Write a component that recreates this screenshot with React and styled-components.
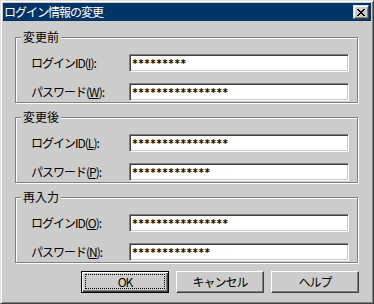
import React from 'react';
import styled, { createGlobalStyle } from 'styled-components';

const GlobalStyle = createGlobalStyle`
  html, body {
    margin: 0;
    padding: 0;
    background: #cccccc;
  }
  body {
    font-family: "Noto Sans CJK JP", "Liberation Sans", sans-serif;
    font-size: 12px;
    color: #000;
  }
`;

const Window = styled.div`
  box-sizing: border-box;
  width: 374px;
  height: 304px;
  display: flex;
  flex-direction: column;
  background: #cccccc;
  border: 1px solid;
  border-color: #dfdfdf #404040 #404040 #dfdfdf;
  box-shadow: inset 1px 1px #fff, inset -1px -1px #808080;
  padding: 2px;
`;

const TitleBar = styled.div`
  height: 18px;
  display: flex;
  align-items: center;
  justify-content: space-between;
  padding: 0 2px 0 1px;
  background: #003366;
`;

const TitleText = styled.span`
  color: #fff;
  font-size: 12px;
  line-height: 18px;
  letter-spacing: -1px;
`;

const CloseButton = styled.div`
  box-sizing: border-box;
  width: 16px;
  height: 14px;
  display: flex;
  align-items: center;
  justify-content: center;
  padding-right: 1px;
  background: #cccccc;
  border: 1px solid;
  border-color: #dfdfdf #404040 #404040 #dfdfdf;
  box-shadow: inset 1px 1px #fff, inset -1px -1px #808080;
`;

const Content = styled.div`
  flex: 1;
  display: flex;
  flex-direction: column;
  padding: 16px 13px 0 12px;
`;

const Groups = styled.div`
  display: flex;
  flex-direction: column;
  gap: 14px;
`;

const Group = styled.div`
  position: relative;
  box-sizing: border-box;
  height: 66px;
  border: 1px solid #808080;
  box-shadow: inset 1px 1px #fff, 1px 1px #fff;
  padding: 14px 8px 0 15px;
  display: grid;
  grid-template-columns: 98px 220px;
  row-gap: 8px;
  align-items: center;
`;

const Legend = styled.span`
  position: absolute;
  top: -7px;
  left: 5px;
  padding: 0 2px;
  background: #cccccc;
  line-height: 12px;
`;

const Label = styled.span`
  white-space: nowrap;
  line-height: 18px;
  letter-spacing: -1px;
`;

const Field = styled.div`
  box-sizing: border-box;
  width: 220px;
  height: 18px;
  display: flex;
  align-items: center;
  padding: 2px 0 0 2px;
  background: #fff;
  border: 1px solid;
  border-color: #808080 #fff #fff #808080;
  box-shadow: inset 1px 1px #404040, inset -1px -1px #cccccc;
  font-family: "DejaVu Sans Mono", monospace;
  font-size: 10px;
  font-weight: bold;
`;

const ButtonRow = styled.div`
  display: flex;
  justify-content: flex-end;
  gap: 7px;
  margin-top: 8px;
  margin-right: -1px;
`;

const Button = styled.div`
  box-sizing: border-box;
  width: 88px;
  height: 22px;
  display: flex;
  padding: 2px 3px 3px;
  background: #cccccc;
  border: 1px solid;
  border-color: ${p => (p.$default ? '#000' : '#fff #404040 #404040 #fff')};
  box-shadow: ${p =>
    p.$default
      ? 'inset 1px 1px #fff, inset -1px -1px #404040, inset -2px -2px #808080'
      : 'inset -1px -1px #808080'};
`;

const ButtonFace = styled.span`
  flex: 1;
  display: flex;
  align-items: center;
  justify-content: center;
  border: 1px dotted ${p => (p.$focus ? '#000' : 'transparent')};
  font-size: 12px;
  line-height: 12px;
  letter-spacing: -1px;
`;

const CloseIcon = () => (
  <svg width="8" height="7" viewBox="0 0 8 7" shapeRendering="crispEdges">
    <path
      fill="#000"
      d="M0 0h2v1H0zM6 0h2v1H6zM1 1h2v1H1zM5 1h2v1H5zM2 2h4v1H2zM3 3h2v1H3zM2 4h4v1H2zM1 5h2v1H1zM5 5h2v1H5zM0 6h2v1H0zM6 6h2v1H6z"
    />
  </svg>
);

const groups = [
  {
    title: '変更前',
    rows: [
      { label: 'ログインID', key: 'I', value: 9 },
      { label: 'パスワード', key: 'W', value: 16 },
    ],
  },
  {
    title: '変更後',
    rows: [
      { label: 'ログインID', key: 'L', value: 16 },
      { label: 'パスワード', key: 'P', value: 13 },
    ],
  },
  {
    title: '再入力',
    rows: [
      { label: 'ログインID', key: 'O', value: 16 },
      { label: 'パスワード', key: 'N', value: 13 },
    ],
  },
];

export default function App() {
  return (
    <>
      <GlobalStyle />
      <Window>
        <TitleBar>
          <TitleText>ログイン情報の変更</TitleText>
          <CloseButton>
            <CloseIcon />
          </CloseButton>
        </TitleBar>
        <Content>
          <Groups>
            {groups.map(g => (
              <Group key={g.title}>
                <Legend>{g.title}</Legend>
                {g.rows.map(r => (
                  <React.Fragment key={r.key}>
                    <Label>
                      {r.label}(<u>{r.key}</u>):
                    </Label>
                    <Field>{'*'.repeat(r.value)}</Field>
                  </React.Fragment>
                ))}
              </Group>
            ))}
          </Groups>
          <ButtonRow>
            <Button $default>
              <ButtonFace $focus>OK</ButtonFace>
            </Button>
            <Button>
              <ButtonFace>キャンセル</ButtonFace>
            </Button>
            <Button>
              <ButtonFace>ヘルプ</ButtonFace>
            </Button>
          </ButtonRow>
        </Content>
      </Window>
    </>
  );
}
